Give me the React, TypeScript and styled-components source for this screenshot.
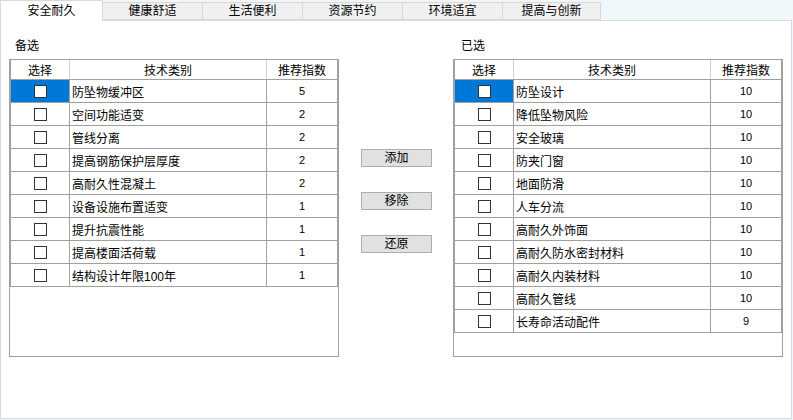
import React from 'react';
import styled, { createGlobalStyle } from 'styled-components';

const GlobalStyle = createGlobalStyle`
  html, body {
    margin: 0;
    padding: 0;
    background: #f0f7fa;
  }
  body {
    font-family: "Liberation Sans", "Noto Sans CJK SC", sans-serif;
    font-size: 12px;
    color: #000;
  }
`;

interface Item {
  name: string;
  score: number;
}

const tabs = ['安全耐久', '健康舒适', '生活便利', '资源节约', '环境适宜', '提高与创新'];

const candidates: Item[] = [
  { name: '防坠物缓冲区', score: 5 },
  { name: '空间功能适变', score: 2 },
  { name: '管线分离', score: 2 },
  { name: '提高钢筋保护层厚度', score: 2 },
  { name: '高耐久性混凝土', score: 2 },
  { name: '设备设施布置适变', score: 1 },
  { name: '提升抗震性能', score: 1 },
  { name: '提高楼面活荷载', score: 1 },
  { name: '结构设计年限100年', score: 1 },
];

const chosen: Item[] = [
  { name: '防坠设计', score: 10 },
  { name: '降低坠物风险', score: 10 },
  { name: '安全玻璃', score: 10 },
  { name: '防夹门窗', score: 10 },
  { name: '地面防滑', score: 10 },
  { name: '人车分流', score: 10 },
  { name: '高耐久外饰面', score: 10 },
  { name: '高耐久防水密封材料', score: 10 },
  { name: '高耐久内装材料', score: 10 },
  { name: '高耐久管线', score: 10 },
  { name: '长寿命活动配件', score: 9 },
];

const Page = styled.div`
  width: 793px;
  height: 420px;
  display: flex;
  flex-direction: column;
  overflow: hidden;
`;

const TabStrip = styled.div`
  display: flex;
  align-items: flex-end;
  height: 20px;
  position: relative;
  z-index: 1;
`;

const Tab = styled.div<{ $active?: boolean; $width: number }>`
  box-sizing: border-box;
  width: ${p => p.$width}px;
  height: ${p => (p.$active ? 21 : 18)}px;
  margin-bottom: ${p => (p.$active ? -1 : 0)}px;
  margin-left: ${p => (p.$active ? 0 : -1)}px;
  background: ${p => (p.$active ? '#ffffff' : '#f0f0f0')};
  border: 1px solid #d9d9d9;
  border-bottom: ${p => (p.$active ? 'none' : '1px solid #d9d9d9')};
  display: flex;
  justify-content: center;
  align-items: ${p => (p.$active ? 'flex-start' : 'center')};
  padding-top: ${p => (p.$active ? 2 : 0)}px;
  line-height: 16px;
  &:first-child {
    margin-left: 0;
  }
`;

const Panel = styled.div`
  box-sizing: border-box;
  width: 792px;
  height: 399px;
  background: #ffffff;
  border: 1px solid #d9d9d9;
  display: flex;
  padding: 0 0 0 8px;
`;

const Side = styled.div`
  display: flex;
  flex-direction: column;
  width: 330px;
`;

const Caption = styled.div<{ $indent: number }>`
  margin-top: 16px;
  height: 18px;
  line-height: 18px;
  padding-left: ${p => p.$indent}px;
`;

const GridBox = styled.div`
  box-sizing: border-box;
  margin-top: 4px;
  width: 330px;
  height: 298px;
  border: 1px solid #a0a0a0;
  background: #ffffff;
`;

const Row = styled.div<{ $header?: boolean }>`
  display: flex;
  height: ${p => (p.$header ? 19 : 22)}px;
  border-left: 1px solid #a0a0a0;
  border-right: 1px solid #a0a0a0;
  border-bottom: 1px solid #a0a0a0;
`;

const Cell = styled.div<{ $w: number; $align?: 'left' | 'center'; $selected?: boolean; $header?: boolean; $num?: boolean }>`
  box-sizing: border-box;
  width: ${p => p.$w}px;
  flex: none;
  display: flex;
  align-items: center;
  justify-content: ${p => (p.$align === 'left' ? 'flex-start' : 'center')};
  padding-left: ${p => (p.$align === 'left' ? 2 : 0)}px;
  background: ${p => (p.$selected ? '#0078d7' : 'transparent')};
  border-right: 1px solid ${p => (p.$header ? '#d0d0d0' : '#a0a0a0')};
  font-size: ${p => (p.$num ? 11 : 12)}px;
  white-space: nowrap;
  &:last-child {
    border-right: none;
  }
`;

const Check = styled.span`
  box-sizing: border-box;
  width: 13px;
  height: 13px;
  border: 1px solid #333333;
  background: #ffffff;
`;

const Middle = styled.div`
  width: 71px;
  margin: 0 21px 0 22px;
  display: flex;
  flex-direction: column;
  gap: 25px;
  padding-top: 128px;
`;

const Button = styled.button`
  box-sizing: border-box;
  width: 71px;
  height: 18px;
  padding: 0;
  background: #e1e1e1;
  border: 1px solid #adadad;
  border-radius: 0;
  font-family: inherit;
  font-size: 12px;
  color: #000;
  line-height: 16px;
`;

function Grid({ items }: { items: Item[] }) {
  return (
    <GridBox>
      <Row $header>
        <Cell $w={59} $header>选择</Cell>
        <Cell $w={197} $header>技术类别</Cell>
        <Cell $w={70} $header>推荐指数</Cell>
      </Row>
      {items.map((it, i) => (
        <Row key={it.name}>
          <Cell $w={59} $selected={i === 0}><Check /></Cell>
          <Cell $w={197} $align="left">{it.name}</Cell>
          <Cell $w={70} $num>{it.score}</Cell>
        </Row>
      ))}
    </GridBox>
  );
}

export default function App() {
  return (
    <Page>
      <GlobalStyle />
      <TabStrip>
        {tabs.map((t, i) => (
          <Tab key={t} $active={i === 0} $width={i === 0 ? 103 : i === 5 ? 99 : 101}>{t}</Tab>
        ))}
      </TabStrip>
      <Panel>
        <Side>
          <Caption $indent={6}>备选</Caption>
          <Grid items={candidates} />
        </Side>
        <Middle>
          <Button>添加</Button>
          <Button>移除</Button>
          <Button>还原</Button>
        </Middle>
        <Side>
          <Caption $indent={8}>已选</Caption>
          <Grid items={chosen} />
        </Side>
      </Panel>
    </Page>
  );
}
